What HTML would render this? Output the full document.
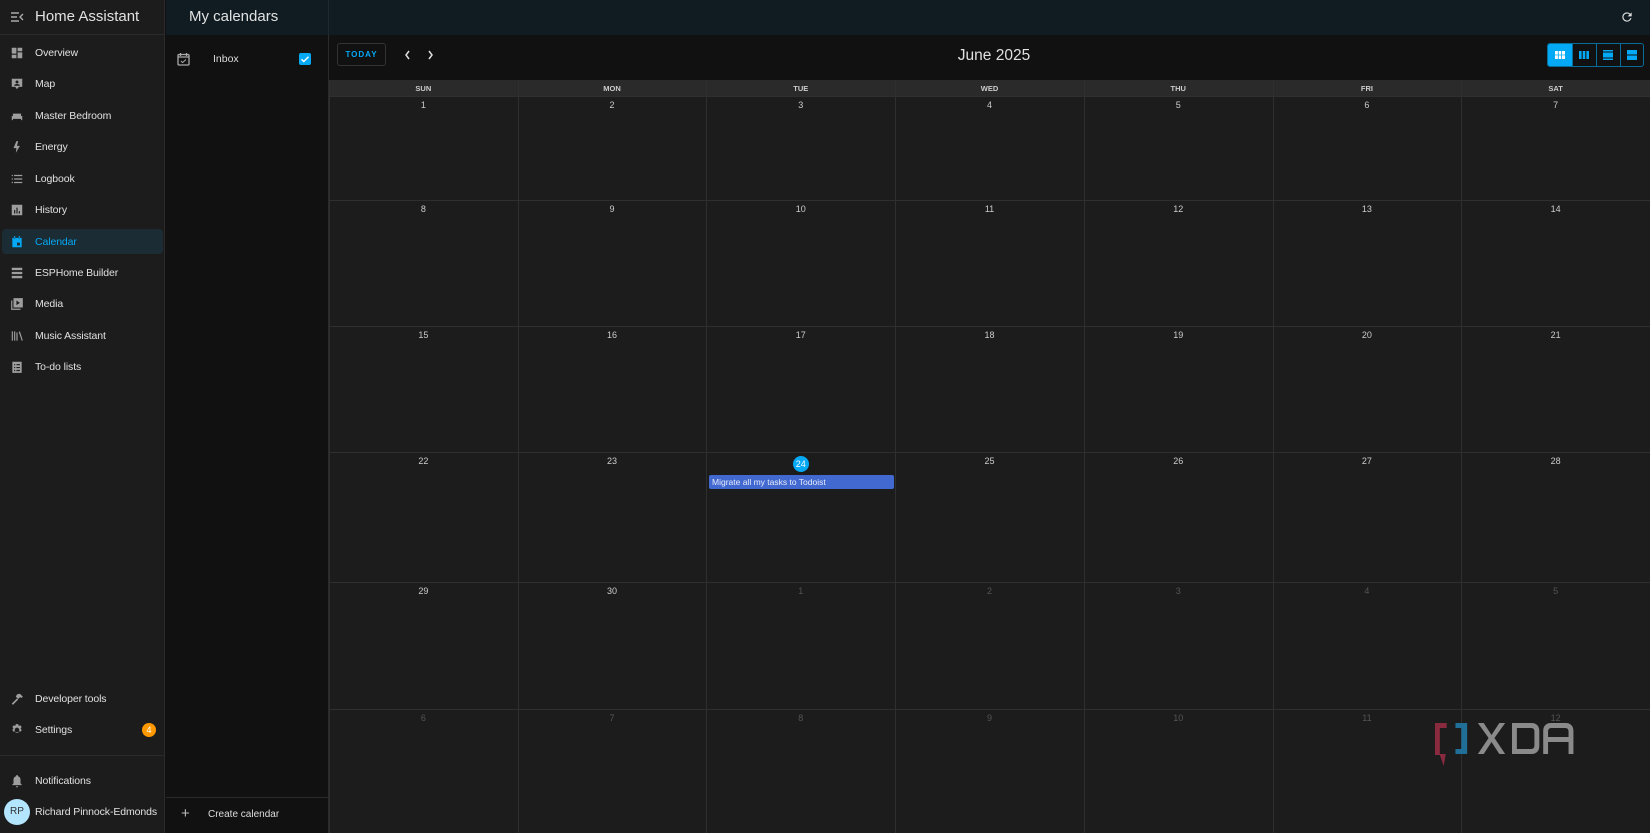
<!DOCTYPE html>
<html><head><meta charset="utf-8"><style>
*{margin:0;padding:0;box-sizing:border-box}
body{width:1650px;height:833px;background:#111;font-family:"Liberation Sans",sans-serif;color:#e1e1e1;position:relative;overflow:hidden}
.a{position:absolute}
#side{left:0;top:0;width:165px;height:833px;background:#1c1c1c;border-right:1px solid #2b2b2b}
.it{position:absolute;left:35px;font-size:10.5px;color:#e1e1e1;letter-spacing:-0.1px}
.ic{position:absolute;left:10px;width:14px;height:14px}
.ic svg{width:14px;height:14px;fill:#9e9e9e}
.cell{position:absolute;font-size:9px;color:#ccc;text-align:center}
.vl{position:absolute;width:1px;background:#2f2f2f}
.hl{position:absolute;height:1px;background:#2f2f2f}
</style></head><body>
<div class="a" id="side">
 <div class="a" style="left:0;top:0;width:165px;height:35px;border-bottom:1px solid #2b2b2b"></div>
 <svg class="a" style="left:10px;top:11px" width="14" height="12" viewBox="0 0 14 12"><path d="M1 2h8M1 6h6M1 10h8M13 3l-3 3 3 3" stroke="#aaa" stroke-width="1.4" fill="none"/></svg>
 <div class="a" style="left:35px;top:8px;font-size:15px;color:#e1e1e1">Home Assistant</div>
 <div class="a" style="left:2px;top:229px;width:161px;height:25px;background:#1b2c35;border-radius:4px"></div>
</div>
<div id="items"></div>
<div class="a" style="left:166px;top:0;width:1484px;height:35px;background:#101c22"></div>
<div class="a" style="left:189px;top:8px;font-size:15px;color:#e1e1e1">My calendars</div>
<div class="a" style="left:328px;top:0;width:1px;height:35px;background:#1e2a30"></div>
<svg class="a" style="left:1620px;top:10px" width="14" height="14" viewBox="0 0 24 24"><path fill="#ddd" d="M17.65 6.35A7.96 7.96 0 0 0 12 4a8 8 0 1 0 7.73 10h-2.08A6 6 0 1 1 12 6c1.66 0 3.14.69 4.22 1.78L13 11h7V4l-2.35 2.35z"/></svg>
<div class="a" style="left:166px;top:35px;width:163px;height:798px;background:#111"></div>
<svg class="a" style="left:177px;top:52px" width="13" height="14" viewBox="0 0 13 14"><rect x="1" y="2.5" width="11" height="10.5" rx="1" fill="none" stroke="#aaa" stroke-width="1.3"/><path d="M3.5 1v3M9.5 1v3M1 5h11" stroke="#aaa" stroke-width="1.3"/><path d="M4 9l1.6 1.6L9 7.5" stroke="#aaa" fill="none" stroke-width="1"/></svg>
<div class="a" style="left:213px;top:53px;font-size:10.5px;color:#ddd">Inbox</div>
<div class="a" style="left:299px;top:53px;width:12px;height:12px;background:#03a9f4;border-radius:2px"></div>
<svg class="a" style="left:299px;top:53px" width="12" height="12"><path d="M2.5 6.2l2.3 2.3L9.5 3.8" stroke="#fff" stroke-width="1.4" fill="none"/></svg>
<div class="a" style="left:166px;top:797px;width:163px;height:1px;background:#2b2b2b"></div>
<div class="a" style="left:181px;top:805px;font-size:15px;color:#bbb">+</div>
<div class="a" style="left:208px;top:809px;font-size:10px;color:#ddd">Create calendar</div>
<div class="a" style="left:328px;top:35px;width:1px;height:798px;background:#2b2b2b"></div>
<div class="a" style="left:337px;top:43px;width:49px;height:23px;border:1px solid #333;border-radius:3px;font-size:8px;color:#03a9f4;font-weight:bold;letter-spacing:1px;text-align:center;line-height:21px">TODAY</div>
<svg class="a" style="left:405px;top:50px" width="30" height="10"><path d="M4 1L1 5l3 4M24 1l3 4-3 4" stroke="#ddd" stroke-width="1.5" fill="none"/></svg>
<div class="a" style="left:900px;top:47px;width:188px;text-align:center;font-size:15.5px;color:#e1e1e1">June 2025</div>
<div class="a" style="left:1547px;top:43px;width:97px;height:24px;border:1px solid #0a6c9a;border-radius:3px;overflow:hidden">
 <div class="a" style="left:0;top:0;width:24px;height:22px;background:#03a9f4"></div>
 <div class="a" style="left:24px;top:0;width:1px;height:22px;background:#0a6c9a"></div>
 <div class="a" style="left:48px;top:0;width:1px;height:22px;background:#0a6c9a"></div>
 <div class="a" style="left:72px;top:0;width:1px;height:22px;background:#0a6c9a"></div>
 <svg class="a" style="left:7px;top:6px" width="10" height="10"><path d="M0 1h10v8H0z" fill="#fff"/><path d="M3.3 1v8M6.6 1v8M0 5h10" stroke="#03a9f4" stroke-width=".8"/></svg>
 <svg class="a" style="left:31px;top:6px" width="10" height="10"><path d="M0 1h2.6v8H0zM3.7 1h2.6v8H3.7zM7.4 1H10v8H7.4z" fill="#03a9f4"/></svg>
 <svg class="a" style="left:55px;top:6px" width="10" height="10"><path d="M0 0h10v1.5H0zM0 2.5h10v5H0zM0 8.5h10V10H0z" fill="#03a9f4"/></svg>
 <svg class="a" style="left:79px;top:6px" width="10" height="10"><path d="M0 0h10v4.5H0zM0 5.5h10V10H0z" fill="#03a9f4"/></svg>
</div>
<div class="a" style="left:329px;top:80px;width:1321px;height:753px;background:#1c1c1c"></div>
<div class="a" style="left:329px;top:80px;width:1321px;height:16px;background:#2a2a2a"></div>
<div id="grid"></div>
<div class="a" style="left:709px;top:475px;width:185px;height:14px;background:#4169cf;border-radius:2px;font-size:8.5px;color:#e8ecff;line-height:14px;padding-left:3px">Migrate all my tasks to Todoist</div>
<svg class="a" style="left:1434px;top:722px" width="156" height="46" viewBox="0 0 160 46" preserveAspectRatio="none"><path d="M1 1h12v5H6v26h6l-2 12-4-11H1z" fill="#8a2a3f"/><path d="M22 1h12v31H22v-5h6V6h-6z" fill="#1f6f99"/><path d="M45 1h6l8 12 8-12h6l-11 15 11 16h-6l-8-12-8 12h-6l11-16z" fill="#8a8a8a"/><path d="M80 1h20c5 0 8 3 8 8v15c0 5-3 8-8 8H80zM85 6v21h14c3 0 4-1 4-4V10c0-3-1-4-4-4z" fill="#8a8a8a" fill-rule="evenodd"/><path d="M112 32V9c0-5 3-8 8-8h15c5 0 8 3 8 8v23h-5V20h-21v12zM117 15h21v-5c0-3-1-4-4-4h-13c-3 0-4 1-4 4z" fill="#8a8a8a" fill-rule="evenodd"/></svg>
<script>
var items=[["Overview",53,"M3 3h8v10H3zM13 3h8v6h-8zM13 11h8v10h-8zM3 15h8v6H3z"],["Map",84,"M3 3h18v14h-6l-3 4-3-4H3zM12 6a2.5 2.5 0 1 0 0 5 2.5 2.5 0 0 0 0-5zM7 15c0-2 3-3 5-3s5 1 5 3z"],["Master Bedroom",116,"M5 8h14v4h2v7h-2v-2H5v2H3v-7h2z"],["Energy",147,"M11 2l-5 12h5l-1 8 7-12h-5l2-8z"],["Logbook",179,"M3 5h2v2H3zM7 5h14v2H7zM3 11h2v2H3zM7 11h14v2H7zM3 17h2v2H3zM7 17h14v2H7z"],["History",210,"M3 3h18v18H3zM7 12v6h2v-6zM11 8v10h2V8zM15 14v4h2v-4z"],["Calendar",242,"M4 5h16v16H4zM7 2h2v4H7zM15 2h2v4h-2zM12 13h5v5h-5z"],["ESPHome Builder",273,"M3 3h18v4H3zM3 10h18v4H3zM3 17h18v4H3z"],["Media",304,"M2 6h2v14h14v2H2zM6 2h16v16H6zM11 6v8l6-4z"],["Music Assistant",336,"M3 20V4h2v16zM7 20V4h2v16zM11 20V6h2v14zM15 5l2-1 5 16h-2z"],["To-do lists",367,"M4 3h16v19H4zM7 7v2h2V7zM11 7h6v2h-6zM7 12v2h2v-2zM11 12h6v2h-6zM7 17v2h2v-2zM11 17h6v2h-6z"],["Developer tools",699,"M3 20l9-9 2 2-9 9zM12 4l5-1 5 5-2 2-3-1-3 3-4-4z"],["Settings",730,"M12 8a4 4 0 1 0 0 8 4 4 0 0 0 0-8zM10 2h4l1 3 3-1 2 3-2 2 2 3-2 3-3-1-1 3h-4l-1-3-3 1-2-3 2-3-2-2 2-3 3 1z"],["Notifications",781,"M12 2a2 2 0 0 1 2 2c3 1 4 3 4 6v6l2 2v1H4v-1l2-2v-6c0-3 1-5 4-6a2 2 0 0 1 2-2zM10 21h4a2 2 0 0 1-4 0z"]];
var h="";
items.forEach(function(t){var c=t[0]=="Calendar";h+='<div class="ic" style="top:'+(t[1]-7)+'px"><svg viewBox="0 0 24 24"><path fill-rule="evenodd" style="fill:'+(c?'#03a9f4':'#9e9e9e')+'" d="'+t[2]+'"/></svg></div><div class="it" style="top:'+(t[1]-6)+'px;'+(c?'color:#03a9f4':'')+'">'+t[0]+'</div>';});
h+='<div class="a" style="left:0;top:755px;width:165px;height:1px;background:#2b2b2b"></div>';
h+='<div class="a" style="left:142px;top:723px;width:14px;height:14px;border-radius:50%;background:#ff9800;color:#fff;font-size:9px;text-align:center;line-height:14px">4</div>';
h+='<div class="a" style="left:4px;top:799px;width:26px;height:26px;border-radius:50%;background:#b3e5fc;color:#333;font-size:10px;text-align:center;line-height:26px">RP</div><div class="it" style="top:806px">Richard Pinnock-Edmonds</div>';
document.getElementById("items").innerHTML=h;
var g="",x0=329,w=(1650-329)/7,rows=[96,200,326,452,582,709,833],days=["SUN","MON","TUE","WED","THU","FRI","SAT"];
for(var i=0;i<7;i++){var x=x0+i*w;g+='<div class="vl" style="left:'+Math.round(x)+'px;top:80px;height:753px"></div><div class="cell" style="left:'+x+'px;top:84px;width:'+w+'px;font-size:7.5px;font-weight:bold;color:#ccc">'+days[i]+'</div>';}
for(var r=0;r<6;r++){g+='<div class="hl" style="left:329px;top:'+rows[r]+'px;width:1321px"></div>';
for(var i=0;i<7;i++){var n=r*7+i+1,o=false;if(n>30){n-=30;o=true;}var x=x0+i*w;
if(n==24&&!o){g+='<div class="a" style="left:'+(x+w/2-8)+'px;top:'+(rows[r]+4)+'px;width:16px;height:16px;border-radius:50%;background:#03a9f4;color:#fff;font-size:9px;text-align:center;line-height:16px">24</div>';}
else g+='<div class="cell" style="left:'+x+'px;top:'+(rows[r]+4)+'px;width:'+w+'px;'+(o?'color:#555':'')+'">'+n+'</div>';}}
document.getElementById("grid").innerHTML=g;
</script>
</body></html>
